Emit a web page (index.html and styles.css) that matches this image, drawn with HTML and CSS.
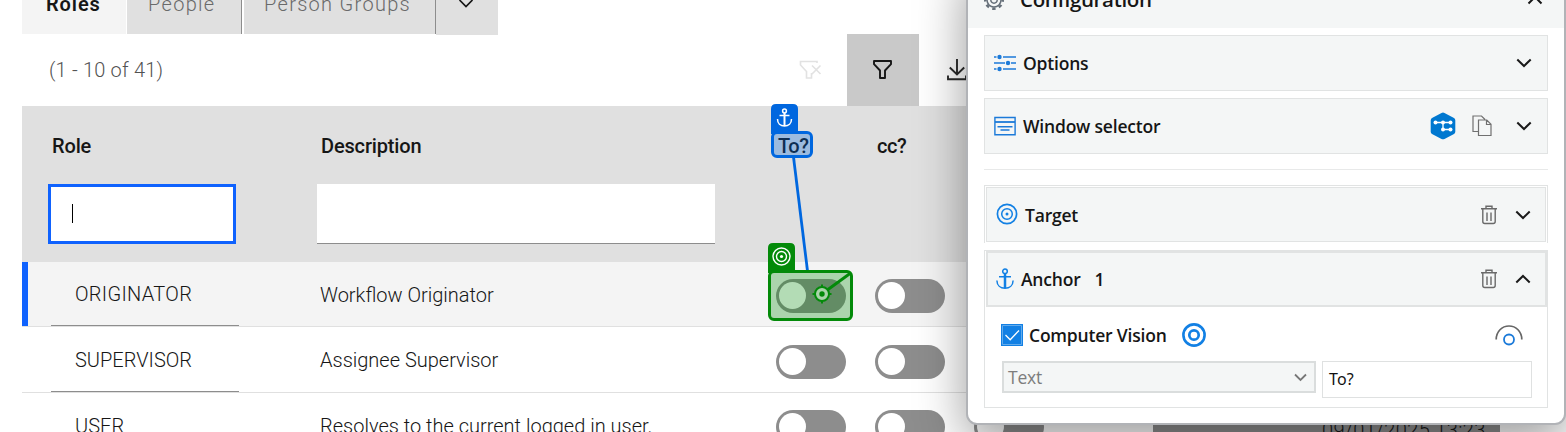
FILE: index.html
```html
<!DOCTYPE html>
<html lang="en">
<head>
<meta charset="utf-8">
<title>Roles</title>
<link rel="stylesheet" href="styles.css">
</head>
<body>
<main class="app">
  <nav class="tabs">
    <div class="tab tab-active"><span class="t-roles">Roles</span></div>
    <div class="tab tab-people"><span class="t-people">People</span></div>
    <div class="tab tab-groups"><span class="t-groups">Person Groups</span></div>
    <div class="tab-more"><svg width="16" height="10" viewBox="0 0 16 10"><path d="M1.500 0 8 6.500l6.500-6.500" fill="none" stroke="#161616" stroke-width="1.700"/></svg></div>
  </nav>
  <div class="toolbar">
    <span class="count">(1 - 10 of 41)</span>
    <div class="tool"><svg width="24" height="24" viewBox="0 0 24 24" fill="none" stroke="#e2e2e2" stroke-width="1.600"><path d="M18 5V3.500H1.500v3.500l6 6.500v6.500h5v-5M13 7.500l8.500 8.500m0-8.500l-8.500 8.500"/></svg></div>
    <div class="tool tool-on"><svg width="24" height="24" viewBox="0 0 24 24" fill="none" stroke="#161616" stroke-width="1.900" stroke-linejoin="round"><path d="M3 3h17v3.200l-6 6.300v7.500H9v-7.500L3 6.200z"/></svg></div>
    <div class="tool tool-download"><svg width="24" height="24" viewBox="0 0 24 24" fill="none" stroke="#2a2a2a" stroke-width="1.900"><path d="M12 1v15.500M4.800 9.500l7.200 7 7.200-7M3 17.500v3.800h18v-3.800"/></svg></div>
  </div>
  <section class="table">
    <div class="row head">
      <div class="cell"><span class="th h-role">Role</span><div class="field field-focus"><i class="caret"></i></div></div>
      <div class="cell"><span class="th h-desc">Description</span><div class="field field-desc"></div></div>
      <div class="cell"><span class="th h-to">To?</span></div>
      <div class="cell"><span class="th h-cc">cc?</span></div>
    </div>
    <div class="row selected">
      <div class="cell"><div class="role-box"><span class="r1">ORIGINATOR</span></div></div>
      <div class="cell desc"><span class="d1">Workflow Originator</span></div>
      <div class="cell"><div class="toggle"></div></div>
      <div class="cell"><div class="toggle"></div></div>
      <div class="cell"><div class="toggle"></div></div>
    </div>
    <div class="row">
      <div class="cell"><div class="role-box"><span class="r2">SUPERVISOR</span></div></div>
      <div class="cell desc"><span class="d2">Assignee Supervisor</span></div>
      <div class="cell"><div class="toggle"></div></div>
      <div class="cell"><div class="toggle"></div></div>
      <div class="cell"><div class="toggle"></div></div>
    </div>
    <div class="row">
      <div class="cell"><div class="role-box"><span class="r3">USER</span></div></div>
      <div class="cell desc"><span class="d3">Resolves to the current logged in user.</span></div>
      <div class="cell"><div class="toggle"></div></div>
      <div class="cell"><div class="toggle"></div></div>
      <div class="cell"><div class="toggle"></div></div>
      <div class="cell"><div class="date"><span>09/01/2025 13:23</span></div></div>
    </div>
  </section>
</main>

<svg class="overlay" width="110" height="230" viewBox="760 100 110 230">
  <path d="M793.500 157 807.500 271" stroke="#0067df" stroke-width="2.800"/>
  <path d="M771 134v-25q0-5 5-5h17q5 0 5 5v25z" fill="#0067df"/>
  <rect x="772.500" y="132.500" width="39" height="24" rx="4.500" fill="#0067df" fill-opacity=".3" stroke="#0067df" stroke-width="3"/>
  <g fill="none" stroke="#fff" stroke-width="1.500"><circle cx="784.500" cy="111" r="1.900"/><path d="M784.500 113v13" stroke-width="2"/><path d="M779.500 115.500h10M777.500 119c0 4.500 3 7 7 7s7-2.500 7-7"/></g>
  <path d="M768 273v-25q0-5 5-5h17q5 0 5 5v25z" fill="#038a09"/>
  <rect x="769.500" y="271.500" width="82" height="48" rx="4.500" fill="#038a09" fill-opacity=".3" stroke="#038a09" stroke-width="3"/>
  <g fill="none" stroke="#fff" stroke-width="1.400"><circle cx="781.500" cy="256.500" r="8.500"/><circle cx="781.500" cy="256.500" r="5"/></g><circle cx="781.500" cy="256.500" r="1.600" fill="#fff"/>
  <path d="m828 289.500 22-16" stroke="#038a09" stroke-width="2.800"/>
  <circle cx="822" cy="294" r="7" fill="#a9d3a9" stroke="#038a09" stroke-width="2"/>
  <circle cx="822" cy="294" r="2.700" fill="#038a09"/>
  <path d="M822 284.500v3.500m0 12v3.500M812.500 294h3.500m12 0h3.500" stroke="#038a09" stroke-width="2"/>
</svg>

<aside class="panel">
  <header class="panel-head">
    <svg width="22" height="22" viewBox="-11 -11 22 22" fill="none" stroke="#66707a" stroke-width="1.500"><circle r="7"/><circle r="3.200"/><circle r="8.700" stroke-width="2.600" stroke-dasharray="3.416 3.416" stroke-dashoffset="1.700"/></svg>
    <span class="t-config">Configuration</span>
    <svg class="end-up" width="16" height="10" viewBox="0 0 16 10"><path d="m1.500 8.500 6.500-6.500 6.500 6.500" fill="none" stroke="#161616" stroke-width="2"/></svg>
  </header>
  <div class="panel-body">
    <div class="card">
      <svg width="22" height="18" viewBox="0 0 22 18" stroke="#1b7ad9" stroke-width="1.500"><path d="M0 3h2.500M9 3h13M0 9h11M17 9h5M0 15h2.500M9 15h13"/><g fill="#1b7ad9" stroke="none"><circle cx="5.500" cy="3" r="2.200"/><circle cx="14" cy="9" r="2.200"/><circle cx="5.500" cy="15" r="2.200"/></g></svg>
      <span class="label t-options">Options</span>
      <svg class="chev" width="16" height="10" viewBox="0 0 16 10"><path d="M1.300 1.500 8 8l6.700-6.500"/></svg>
    </div>
    <div class="card">
      <svg width="22" height="20" viewBox="0 0 22 20" fill="none" stroke="#1b7ad9" stroke-width="1.400"><path d="M.9 1.500h20.200v17.200H.9z"/><path d="M1 6h20" stroke-width="1.800"/><path d="M3.500 10.800h15M6.500 14h9"/></svg>
      <span class="label t-window">Window selector</span>
      <svg class="hex" width="26" height="28" viewBox="0 0 26 28"><path d="M11.500 1q1.500-.8 3 0l9.500 5q1.300.7 1.300 2.200v11.500q0 1.500-1.300 2.200l-9.500 5q-1.500.8-3 0l-9.500-5q-1.300-.7-1.300-2.200V8.200q0-1.500 1.300-2.200z" fill="#0078d0"/><path d="M5.500 10.500h15.500M13 10.500v7h8" fill="none" stroke="#fff" stroke-width="1.300"/><g fill="#fff"><circle cx="5.500" cy="10.500" r="2"/><circle cx="13" cy="10.500" r="2"/><circle cx="20.500" cy="10.500" r="2"/><circle cx="13" cy="17.500" r="2"/><circle cx="20.500" cy="17.500" r="2"/></g></svg>
      <svg class="copy" width="20" height="22" viewBox="0 0 20 22" fill="none" stroke="#707070" stroke-width="1.200"><path d="M6.500 16.500H1V1h8.500l3.500 3.500M6.500 5h8.300l4.200 4.300v11.200H6.500zM14.500 5v4.500H19"/></svg>
      <svg class="chev" width="16" height="10" viewBox="0 0 16 10"><path d="M1.300 1.500 8 8l6.700-6.500"/></svg>
    </div>
    <hr class="rule">
    <div class="group">
      <div class="inner inner-target">
        <svg class="aim" width="22" height="22" viewBox="0 0 22 22" fill="none" stroke="#1280e4"><circle cx="11" cy="11" r="9.600" stroke-width="1.700"/><circle cx="11" cy="11" r="5.300" stroke-width="1.500"/><circle cx="11" cy="11" r="1.500" fill="#1280e4" stroke="none"/></svg>
        <span class="label t-target">Target</span>
        <svg class="trash" width="18" height="20" viewBox="0 0 18 20"><path d="M1 3.700h16M6 3.500V1.300h6v2.200M2.800 4v12.500q0 2 2 2h8.400q2 0 2-2V4M7 7.500v8.500M11 7.500v8.500"/></svg>
        <svg class="chev" width="16" height="10" viewBox="0 0 16 10"><path d="M1.300 1.500 8 8l6.700-6.500"/></svg>
      </div>
    </div>
    <div class="group group-anchor">
      <div class="inner inner-anchor">
        <svg width="18" height="22" viewBox="0 0 18 22" fill="none" stroke="#1280e4" stroke-width="1.500"><circle cx="9" cy="3.300" r="2.300"/><path d="M9 5.500V20" stroke-width="2.500"/><path d="M3 8.700h12M.9 12.500C1 17.500 4.500 20.300 9 20.300s8-2.800 8.100-7.800"/></svg>
        <span class="label t-anchor">Anchor</span><span class="label t-one">1</span>
        <svg class="trash" width="18" height="20" viewBox="0 0 18 20"><path d="M1 3.700h16M6 3.500V1.300h6v2.200M2.800 4v12.500q0 2 2 2h8.400q2 0 2-2V4M7 7.500v8.500M11 7.500v8.500"/></svg>
        <svg class="chev" width="16" height="10" viewBox="0 0 16 10"><path d="M1.300 8.500 8 2l6.700 6.500"/></svg>
      </div>
      <div class="cv">
        <svg width="22" height="22" viewBox="0 0 22 22"><path d="M0 0h22v22H0z" fill="#1280e4"/><path d="M1.500 1.500h19v19h-19z" fill="none" stroke="#62abec"/><path d="m4.500 11 4.700 4.700L18 6.500" fill="none" stroke="#fff" stroke-width="1.300"/></svg>
        <span class="label t-cv">Computer Vision</span>
        <svg width="24" height="24" viewBox="0 0 24 24" fill="none" stroke="#1280e4"><circle cx="12" cy="12" r="10.600" stroke-width="2.600"/><circle cx="12" cy="12" r="4.700" stroke-width="2.700"/></svg>
        <svg class="eye" width="28" height="22" viewBox="0 0 28 22" fill="none"><path d="M1.200 15.500C1.200 7.500 7 2 14 2s12.800 5.500 12.800 13.500" stroke="#666" stroke-width="1.700"/><circle cx="14" cy="15.500" r="5" stroke="#1b7ad9" stroke-width="1.800"/></svg>
      </div>
      <div class="inputs">
        <div class="select"><span class="t-text">Text</span><svg width="13" height="9" viewBox="0 0 13 9"><path d="m1 1.500 5.500 5.500L12 1.500" fill="none" stroke="#777" stroke-width="1.800"/></svg></div>
        <div class="value"><span>To?</span></div>
      </div>
    </div>
  </div>
</aside>
</body>
</html>
```
FILE: styles.css
```css
* { box-sizing: border-box; }
body {
  position: relative;
  width: 1566px;
  height: 432px;
  margin: 0;
  overflow: hidden;
  background: #fff;
  color: #161616;
  font-family: "Roboto", "Liberation Sans", sans-serif;
  font-size: 20px;
}
svg { display: block; flex: none; }
span { white-space: nowrap; }

/* Roles list */
.app { height: 432px; padding-left: 22px; overflow: hidden; }
.tabs { display: flex; height: 34px; }
.tab { display: flex; height: 34px; background: #e0e0e0; color: #6a6a6a; font-weight: 300; line-height: 24px; }
.tab span { margin-top: -8px; }
.tab-active { width: 104px; margin-right: 1px; padding-left: 24px; background: #f4f4f4; color: #161616; font-weight: 600; }
.tab-people { width: 115px; margin-right: 2px; padding-left: 21px; border-right: 1px solid #8d8d8d; }
.tab-groups { width: 192px; padding-left: 20px; border-right: 1px solid #8d8d8d; }
.tab-more { width: 62px; height: 35px; padding: 0 0 0 22px; background: #e0e0e0; }
.t-roles { letter-spacing: .9px; }
.t-people, .t-groups { letter-spacing: 1.3px; }

.toolbar { display: flex; align-items: center; height: 72px; }
.count { width: 725px; margin-right: 28px; padding-left: 27px; color: #525252; font-weight: 300; letter-spacing: .2px; }
.tool { display: flex; flex: none; align-items: center; justify-content: center; width: 72px; height: 72px; }
.tool-on { background: #c9c9c9; }
.tool-download { padding-left: 3px; }

.row { display: grid; grid-template-columns: 295px 459px 99px 99px 179px 1fr; height: 66px; border-bottom: 1px solid #e0e0e0; }
.head { height: 156px; border: 0; background: #e0e0e0; }
.selected { height: 65px; background: #f4f4f4; box-shadow: inset 6px 0 #0f62fe; }
.th { display: block; height: 24px; margin-top: 28px; font-weight: 500; line-height: 24px; letter-spacing: -.15px; }
.h-role { margin-left: 30px; }
.h-desc { margin-left: 4px; }
.h-to, .h-cc { margin-left: 2px; letter-spacing: -.5px; }
.field { height: 60px; margin-top: 26px; background: #fff; border-bottom: 1px solid #8d8d8d; }
.field-focus { display: flex; align-items: center; width: 188px; margin-left: 26px; padding-left: 21px; border: 3px solid #0f62fe; }
.field-desc { width: 398px; }
.caret { width: 1px; height: 19px; margin-bottom: 1px; background: #000; }
.role-box { width: 188px; height: 64px; margin-left: 29px; padding: 20px 0 0 24px; border-bottom: 1px solid #8d8d8d; font-weight: 300; line-height: 24px; }
.r1 { letter-spacing: .3px; }
.row:not(.selected) .role-box { height: 65px; padding-top: 21px; }
.desc { padding: 21px 0 0 3px; font-weight: 300; line-height: 24px; }
.toggle { width: 70px; height: 34px; margin-top: 17px; padding: 3px; background: #8d8d8d; border-radius: 17px; }
.row:not(.selected) .toggle { margin-top: 18px; }
.row:last-child .toggle { margin-top: 17px; }
.toggle::before { content: ""; display: block; width: 27px; height: 27px; border-radius: 50%; background: #fff; }
.date { width: 347px; height: 60px; padding: 25px 0 0 169px; background: #8d8d8d; font-weight: 300; line-height: 24px; letter-spacing: .35px; }

.overlay { position: absolute; left: 760px; top: 100px; }

/* Floating properties panel */
.panel {
  position: absolute;
  left: 966px;
  top: -40px;
  width: 600px;
  height: 465px;
  background: #fff;
  border: 2px solid #b1b3b7;
  border-radius: 11px;
  box-shadow: 0 16px 50px rgba(0, 0, 0, .4);
  font-family: "Open Sans", "Noto Sans", sans-serif;
  font-weight: 600;
  font-size: 17.5px;
  letter-spacing: -.2px;
}
.panel-head { display: flex; align-items: flex-start; height: 66px; padding: 27px 21px 0 15px; background: #f4f6f6; border-radius: 9px 9px 0 0; }
.t-config { margin: -4px 0 0 15px; font-size: 20.5px; line-height: 28px; letter-spacing: -.35px; }
.end-up { margin: 6px 0 0 auto; }
.panel-body { padding: 7px 16px 0; }
.card { display: flex; align-items: center; height: 56px; margin-bottom: 7px; padding: 0 15px 0 9px; background: #f4f6f6; border: 1px solid #e1e3e3; }
.label { line-height: 24px; }
.card .label { margin-left: 7px; }
.chev { fill: none; stroke: #1a1a1a; stroke-width: 2; }
.t-options + .chev { margin-left: auto; }
.hex { margin-left: auto; margin-right: 16px; }
.copy { margin-right: 24px; }
.trash { margin-left: auto; margin-right: 17px; fill: none; stroke: #6a6a6a; stroke-width: 1.4; }
.rule { height: 1px; margin: 15px 0; border: 0; background: #e8e9e9; }
.group { margin-bottom: 7px; padding: 1px; border: 1px solid #e1e3e3; border-bottom: 0; }
.inner { display: flex; align-items: center; height: 55px; padding: 0 14px 0 9px; background: #f4f6f6; border: 1px solid #e1e3e3; }
.aim { margin-bottom: 2px; }
.group-anchor { height: 158px; padding: 0 0 0 1px; border: 1px solid #e1e3e3; }
.inner-anchor { height: 56px; padding: 0 14px 0 8px; border-width: 2px; }
.t-target { margin-left: 7px; }
.t-anchor { margin-left: 7px; }
.t-one { margin-left: 14px; }
.cv { display: flex; align-items: center; height: 54px; padding: 2px 24px 0 15px; }
.t-cv { margin: 0 15px 0 6px; }
.eye { margin-left: auto; }
.inputs { display: flex; align-items: flex-start; padding-left: 16px; gap: 6px; }
.select { display: flex; align-items: center; justify-content: space-between; width: 314px; height: 32px; padding: 0 7px 0 4px; background: #f4f6f6; border: 2px solid #dadddd; color: #7d7d7d; font-weight: 400; }
.value { width: 210px; height: 37px; padding: 7px 6px; border: 1px solid #dfe1e1; color: #111; font: 400 16px/20px "Noto Sans", sans-serif; letter-spacing: .2px; }
```
